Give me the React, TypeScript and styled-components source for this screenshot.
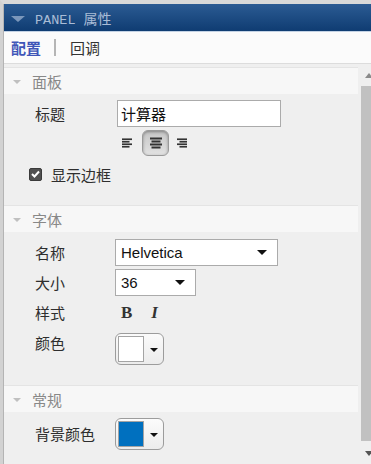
import * as React from "react"
import styled, { createGlobalStyle } from "styled-components"

const GlobalStyle = createGlobalStyle`
    html, body {
        margin: 0;
        padding: 0;
        background: #efefef;
    }
    body {
        font-family: "Noto Sans CJK SC", "Liberation Sans", sans-serif;
        color: #333;
    }
`

const Frame = styled.div`
    width: 371px;
    height: 464px;
    box-sizing: border-box;
    border-top: 4px solid #d9d9d9;
    border-left: 3px solid #d2d2d2;
    display: flex;
    flex-direction: column;
    overflow: hidden;
`

const Inner = styled.div`
    flex: 1;
    display: flex;
    flex-direction: column;
    border-left: 1px solid #b4b4b4;
    min-height: 0;
`

const Header = styled.div`
    height: 27px;
    display: flex;
    align-items: center;
    gap: 10px;
    padding-left: 7px;
    background: linear-gradient(#2b5b93, #0f3c72);
    color: #a9bcd6;
`

const HeaderArrow = styled.span`
    width: 0;
    height: 0;
    border-left: 7px solid transparent;
    border-right: 7px solid transparent;
    border-top: 6px solid #7b97bb;
    margin-top: 2px;
`

const HeaderTitle = styled.span`
    font-family: "Liberation Mono", monospace;
    font-size: 13.5px;
    span {
        font-family: "Noto Sans CJK SC", sans-serif;
        font-size: 14px;
    }
`

const Tabs = styled.div`
    height: 31px;
    display: flex;
    align-items: center;
    padding-left: 7px;
    background: #fbfbfb;
    border-top: 1px solid #c3d2e4;
    border-bottom: 1px solid #dcdcdc;
    font-size: 15px;
`

const Tab = styled.span<{ $active?: boolean }>`
    color: ${p => (p.$active ? "#3f56b8" : "#333")};
    font-weight: ${p => (p.$active ? 700 : 400)};
    line-height: 20px;
`

const TabDivider = styled.span`
    width: 2px;
    height: 17px;
    background: #b5b5b5;
    margin: 0 14px 0 13px;
`

const Body = styled.div`
    flex: 1;
    display: flex;
    min-height: 0;
`

const Content = styled.div`
    flex: 1;
    padding-top: 3px;
`

const SectionHeader = styled.div`
    height: 26px;
    display: flex;
    align-items: center;
    gap: 11px;
    padding-left: 9px;
    background: #f7f7f7;
    border-top: 1px solid #e4e4e4;
    color: #888;
    font-size: 15px;
`

const SectionArrow = styled.span`
    width: 0;
    height: 0;
    border-left: 4px solid transparent;
    border-right: 4px solid transparent;
    border-top: 4px solid #c0c0c0;
    margin-top: 2px;
`

const SectionBody = styled.div<{ $pt: number; $pb: number }>`
    display: flex;
    flex-direction: column;
    padding: ${p => p.$pt}px 0 ${p => p.$pb}px;
`

const Row = styled.div<{ $h: number; $mt?: number; $top?: boolean }>`
    height: ${p => p.$h}px;
    margin-top: ${p => p.$mt || 0}px;
    display: grid;
    grid-template-columns: 80px auto;
    align-items: ${p => (p.$top ? "start" : "center")};
    padding-left: 31px;
    font-size: 15px;
`

const Label = styled.span`
    line-height: 20px;
    color: #2e2e2e;
`

const TextInput = styled.div`
    width: 164px;
    height: 27px;
    box-sizing: border-box;
    margin-left: 2px;
    border: 1px solid #ababab;
    background: #fff;
    display: flex;
    align-items: center;
    padding-left: 3px;
    font-size: 15px;
    color: #111;
`

const AlignGroup = styled.div`
    display: flex;
    align-items: center;
    height: 26px;
    margin-left: 6px;
`

const AlignButton = styled.div<{ $pressed?: boolean }>`
    width: ${p => (p.$pressed ? "27px" : "12px")};
    height: 26px;
    box-sizing: border-box;
    display: flex;
    align-items: center;
    justify-content: center;
    border-radius: 6px;
    border: 1px solid ${p => (p.$pressed ? "#9a9a9a" : "transparent")};
    background: ${p => (p.$pressed ? "linear-gradient(#c6c6c6, #e2e2e2)" : "transparent")};
    box-shadow: ${p => (p.$pressed ? "inset 0 1px 3px rgba(0,0,0,0.35)" : "none")};
    margin: ${p => (p.$pressed ? "0 7px 0 9px" : "0")};
`

const CheckRow = styled.div`
    height: 22px;
    margin-top: 7px;
    display: flex;
    align-items: center;
    gap: 9px;
    padding-left: 25px;
    font-size: 15px;
    color: #2e2e2e;
`

const CheckBox = styled.span`
    width: 13px;
    height: 13px;
    border-radius: 2px;
    background: #505050;
    border: 1px solid #3a3a3a;
    box-sizing: border-box;
    display: flex;
    align-items: center;
    justify-content: center;
`

const Select = styled.div<{ $w: number }>`
    width: ${p => p.$w}px;
    height: 27px;
    box-sizing: border-box;
    border: 1px solid #ababab;
    background: #fff;
    display: flex;
    align-items: center;
    justify-content: space-between;
    padding: 0 10px 0 5px;
    font-family: "Liberation Sans", Arial, sans-serif;
    font-size: 15px;
    color: #111;
`

const Caret = styled.span`
    width: 0;
    height: 0;
    border-left: 5px solid transparent;
    border-right: 5px solid transparent;
    border-top: 5px solid #111;
`

const StyleButtons = styled.div`
    display: flex;
    align-items: center;
    gap: 19px;
    padding-left: 6px;
    font-family: "Liberation Serif", "Times New Roman", serif;
    font-size: 17px;
    font-weight: 700;
    color: #333;
`

const ColorButton = styled.div`
    width: 49px;
    height: 32px;
    box-sizing: border-box;
    border: 1px solid #9c9c9c;
    border-radius: 6px;
    background: linear-gradient(#fbfbfb, #ececec);
    display: flex;
    align-items: center;
    gap: 6px;
    padding-left: 2px;
`

const Swatch = styled.span<{ $color: string }>`
    width: 26px;
    height: 26px;
    box-sizing: border-box;
    border: 1px solid #a4a4a4;
    background: ${p => p.$color};
`

const SmallCaret = styled(Caret)`
    border-left-width: 4px;
    border-right-width: 4px;
    border-top-width: 4px;
    margin-top: 1px;
`

const ScrollBar = styled.div`
    width: 10px;
    margin-left: 3px;
    display: flex;
    flex-direction: column;
    align-items: flex-start;
    padding: 9px 0 8px;
    overflow: hidden;
`

const ScrollUp = styled.span`
    width: 0;
    height: 0;
    margin-left: 4px;
    border-left: 4px solid transparent;
    border-right: 4px solid transparent;
    border-bottom: 5px solid #8a8a8a;
`

const ScrollTrack = styled.div`
    flex: 1;
    width: 10px;
    margin: 8px 0 10px;
    background: #c1c1c1;
`

const ScrollDown = styled(ScrollUp)`
    border-bottom: none;
    border-top: 5px solid #555;
`

const AlignIcon = ({ mode }: { mode: "left" | "center" | "right" }) => {
    const short = 9
    const x = mode === "left" ? 0 : mode === "center" ? 1.5 : 3
    return (
        <svg width="12" height="12" viewBox="0 0 12 12">
            <rect x="0" y="0.5" width="12" height="2" fill="#333" />
            <rect x={x} y="3.5" width={short} height="2" fill="#333" />
            <rect x="0" y="6.5" width="12" height="2" fill="#333" />
            <rect x={x} y="9.5" width={short} height="2" fill="#333" />
        </svg>
    )
}

const Check = () => (
    <svg width="9" height="8" viewBox="0 0 9 8">
        <path d="M1 4 L3.5 6.5 L8 1.5" stroke="#fff" strokeWidth="2" fill="none" />
    </svg>
)

const Section = ({ title, children, pt, pb }: { title: string, children: React.ReactNode, pt: number, pb: number }) => (
    <>
        <SectionHeader>
            <SectionArrow />
            {title}
        </SectionHeader>
        <SectionBody $pt={pt} $pb={pb}>{children}</SectionBody>
    </>
)

export default function App() {
    return (
        <>
            <GlobalStyle />
            <Frame>
                <Inner>
                    <Header>
                        <HeaderArrow />
                        <HeaderTitle>PANEL <span>属性</span></HeaderTitle>
                    </Header>
                    <Tabs>
                        <Tab $active>配置</Tab>
                        <TabDivider />
                        <Tab>回调</Tab>
                    </Tabs>
                    <Body>
                        <Content>
                            <Section title="面板" pt={6} pb={20}>
                                <Row $h={27}>
                                    <Label>标题</Label>
                                    <TextInput>计算器</TextInput>
                                </Row>
                                <Row $h={26} $mt={3}>
                                    <span />
                                    <AlignGroup>
                                        <AlignButton><AlignIcon mode="left" /></AlignButton>
                                        <AlignButton $pressed><AlignIcon mode="center" /></AlignButton>
                                        <AlignButton><AlignIcon mode="right" /></AlignButton>
                                    </AlignGroup>
                                </Row>
                                <CheckRow>
                                    <CheckBox><Check /></CheckBox>
                                    显示边框
                                </CheckRow>
                            </Section>
                            <Section title="字体" pt={7} pb={20}>
                                <Row $h={27}>
                                    <Label>名称</Label>
                                    <Select $w={163}>Helvetica<Caret /></Select>
                                </Row>
                                <Row $h={27} $mt={3}>
                                    <Label>大小</Label>
                                    <Select $w={81}>36<Caret /></Select>
                                </Row>
                                <Row $h={27} $mt={3}>
                                    <Label>样式</Label>
                                    <StyleButtons>
                                        <span>B</span>
                                        <i>I</i>
                                    </StyleButtons>
                                </Row>
                                <Row $h={32} $mt={7} $top>
                                    <Label>颜色</Label>
                                    <ColorButton>
                                        <Swatch $color="#ffffff" />
                                        <SmallCaret />
                                    </ColorButton>
                                </Row>
                            </Section>
                            <Section title="常规" pt={6} pb={0}>
                                <Row $h={32}>
                                    <Label>背景颜色</Label>
                                    <ColorButton>
                                        <Swatch $color="#0070bf" />
                                        <SmallCaret />
                                    </ColorButton>
                                </Row>
                            </Section>
                        </Content>
                        <ScrollBar>
                            <ScrollUp />
                            <ScrollTrack />
                            <ScrollDown />
                        </ScrollBar>
                    </Body>
                </Inner>
            </Frame>
        </>
    )
}
